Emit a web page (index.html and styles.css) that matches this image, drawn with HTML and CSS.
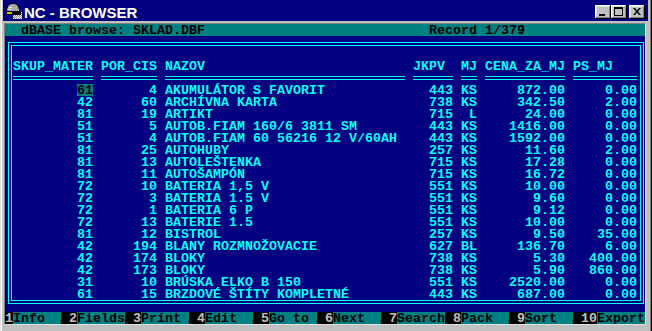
FILE: index.html
```html
<!DOCTYPE html>
<html>
<head>
<meta charset="utf-8">
<title>NC - BROWSER</title>
<link rel="stylesheet" href="styles.css">
</head>
<body>
<div class="window">
  <div class="titlebar">
    <svg class="app-icon" viewBox="0 0 18 16" width="18" height="16">
      <defs>
        <pattern id="dith" width="2" height="2" patternUnits="userSpaceOnUse">
          <rect width="2" height="2" fill="#808080"/>
          <rect width="1" height="1" fill="#ffffff"/>
          <rect x="1" y="1" width="1" height="1" fill="#ffffff"/>
        </pattern>
      </defs>
      <rect x="9" y="9" width="9" height="7" fill="url(#dith)"/>
      <path d="M2.5 8.5 C2.5 3.5 5 0.5 9 0.5 C13 0.5 15.5 3.5 15.5 8.5 Z" fill="#a8a8a8" stroke="#000"/>
      <path d="M5 4.5 h3 M4.5 6 h2" stroke="#e8e8e8"/>
      <rect x="1" y="8" width="16" height="4" fill="#000"/>
      <rect x="3" y="9" width="5" height="2" fill="#d8c400"/>
    </svg>
    <span class="title">NC - BROWSER</span>
    <div class="controls">
      <span class="btn btn-min"><i></i></span>
      <span class="btn btn-max"><i></i></span>
      <span class="btn btn-close"><svg viewBox="0 0 8 7" width="8" height="7"><path d="M0 0 L2 0 L4 2.5 L6 0 L8 0 L5 3.5 L8 7 L6 7 L4 4.5 L2 7 L0 7 L3 3.5 Z" fill="#000"/></svg></span>
    </div>
  </div>
  <div class="screen">
    <div class="status"><span>dBASE browse: SKLAD.DBF</span><span>Record 1/379</span></div>
    <div class="box">
      <div class="box-inner">
        <div class="grid">
          <div class="c">SKUP_MATER</div><div class="c">POR_CIS</div><div class="c">NAZOV</div><div class="c">JKPV</div><div class="c">MJ</div><div class="c">CENA_ZA_MJ</div><div class="c">PS_MJ</div>
          <div class="u"></div><div class="u"></div><div class="u"></div><div class="u"></div><div class="u"></div><div class="u"></div><div class="u"></div>

          <div class="c r"><span class="hl">61</span></div><div class="c r">4</div><div class="c">AKUMULÁTOR S FAVORIT</div><div class="c r">443</div><div class="c r">KS</div><div class="c r">872.00</div><div class="c r">0.00</div>
          <div class="c r">42</div><div class="c r">60</div><div class="c">ARCHÍVNA KARTA</div><div class="c r">738</div><div class="c r">KS</div><div class="c r">342.50</div><div class="c r">2.00</div>
          <div class="c r">81</div><div class="c r">19</div><div class="c">ARTIKT</div><div class="c r">715</div><div class="c r">L</div><div class="c r">24.00</div><div class="c r">0.00</div>
          <div class="c r">51</div><div class="c r">5</div><div class="c">AUTOB.FIAM 160/6 3811 SM</div><div class="c r">443</div><div class="c r">KS</div><div class="c r">1416.00</div><div class="c r">0.00</div>
          <div class="c r">51</div><div class="c r">4</div><div class="c">AUTOB.FIAM 60 56216 12 V/60AH</div><div class="c r">443</div><div class="c r">KS</div><div class="c r">1592.00</div><div class="c r">0.00</div>
          <div class="c r">81</div><div class="c r">25</div><div class="c">AUTOHUBY</div><div class="c r">257</div><div class="c r">KS</div><div class="c r">11.60</div><div class="c r">2.00</div>
          <div class="c r">81</div><div class="c r">13</div><div class="c">AUTOLEŠTENKA</div><div class="c r">715</div><div class="c r">KS</div><div class="c r">17.28</div><div class="c r">0.00</div>
          <div class="c r">81</div><div class="c r">11</div><div class="c">AUTOŠAMPÓN</div><div class="c r">715</div><div class="c r">KS</div><div class="c r">16.72</div><div class="c r">0.00</div>
          <div class="c r">72</div><div class="c r">10</div><div class="c">BATERIA 1,5 V</div><div class="c r">551</div><div class="c r">KS</div><div class="c r">10.00</div><div class="c r">0.00</div>
          <div class="c r">72</div><div class="c r">3</div><div class="c">BATERIA 1.5 V</div><div class="c r">551</div><div class="c r">KS</div><div class="c r">9.60</div><div class="c r">0.00</div>
          <div class="c r">72</div><div class="c r">1</div><div class="c">BATERIA 6 P</div><div class="c r">551</div><div class="c r">KS</div><div class="c r">9.12</div><div class="c r">0.00</div>
          <div class="c r">72</div><div class="c r">13</div><div class="c">BATERIE 1.5</div><div class="c r">551</div><div class="c r">KS</div><div class="c r">10.00</div><div class="c r">0.00</div>
          <div class="c r">81</div><div class="c r">12</div><div class="c">BISTROL</div><div class="c r">257</div><div class="c r">KS</div><div class="c r">9.50</div><div class="c r">35.00</div>
          <div class="c r">42</div><div class="c r">194</div><div class="c">BLANY ROZMNOŽOVACIE</div><div class="c r">627</div><div class="c r">BL</div><div class="c r">136.70</div><div class="c r">6.00</div>
          <div class="c r">42</div><div class="c r">174</div><div class="c">BLOKY</div><div class="c r">738</div><div class="c r">KS</div><div class="c r">5.30</div><div class="c r">400.00</div>
          <div class="c r">42</div><div class="c r">173</div><div class="c">BLOKY</div><div class="c r">738</div><div class="c r">KS</div><div class="c r">5.90</div><div class="c r">860.00</div>
          <div class="c r">31</div><div class="c r">10</div><div class="c">BRÚSKA ELKO B 150</div><div class="c r">551</div><div class="c r">KS</div><div class="c r">2520.00</div><div class="c r">0.00</div>
          <div class="c r">61</div><div class="c r">15</div><div class="c">BRZDOVÉ ŠTÍTY KOMPLETNÉ</div><div class="c r">443</div><div class="c r">KS</div><div class="c r">687.00</div><div class="c r">0.00</div>
        </div>
      </div>
    </div>
    <div class="keys">
      <span class="kn">1</span><span class="kl">Info</span>
      <span class="kn">2</span><span class="kl">Fields</span>
      <span class="kn">3</span><span class="kl">Print</span>
      <span class="kn">4</span><span class="kl">Edit</span>
      <span class="kn">5</span><span class="kl">Go to</span>
      <span class="kn">6</span><span class="kl">Next</span>
      <span class="kn">7</span><span class="kl">Search</span>
      <span class="kn">8</span><span class="kl">Pack</span>
      <span class="kn">9</span><span class="kl">Sort</span>
      <span class="kn">10</span><span class="kl">Export</span>
    </div>
  </div>
</div>
</body>
</html>
```

FILE: styles.css
```css
html, body {
  margin: 0;
  padding: 0;
  background: #c0c0c0;
  overflow: hidden;
}

.window {
  width: 652px;
  height: 331px;
  box-sizing: border-box;
  padding: 0 4px 0 3px;
  background: #c0c0c0;
  box-shadow: inset 1px 0 #dfdfdf, inset 2px 0 #ffffff, inset -1px 0 #000000, inset -2px 0 #808080;
}

/* ---------- title bar ---------- */
.titlebar {
  height: 21px;
  margin-bottom: 2px;
  background: #000080;
  display: flex;
  align-items: flex-start;
}

.app-icon {
  display: block;
  margin: 3px 0 0 1px;
  flex: none;
}

.title {
  margin: 4px 0 0 2px;
  font-family: "Liberation Sans", Arial, sans-serif;
  font-weight: bold;
  font-size: 15px;
  line-height: 17px;
  color: #ffffff;
  white-space: pre;
}

.controls {
  margin: 5px 3px 0 auto;
  display: flex;
}

.btn {
  width: 16px;
  height: 14px;
  box-sizing: border-box;
  background: #c0c0c0;
  box-shadow: inset -1px -1px #000000, inset 1px 1px #ffffff, inset -2px -2px #808080, inset 2px 2px #dfdfdf;
  display: flex;
}

.btn-close {
  margin-left: 2px;
}

.btn-min i {
  display: block;
  width: 6px;
  height: 2px;
  background: #000;
  margin: 9px 0 0 4px;
}

.btn-max i {
  display: block;
  width: 9px;
  height: 9px;
  box-sizing: border-box;
  border: 1px solid #000;
  border-top-width: 2px;
  margin: 2px 0 0 3px;
}

.btn-close svg {
  display: block;
  margin: 3px 0 0 4px;
}

/* ---------- text-mode screen ---------- */
.screen {
  width: 640px;
  height: 300px;
  margin-left: 1px;
  border-top: 1px solid #808080;
  border-left: 1px solid #808080;
  border-right: 1px solid #dfdfdf;
  border-bottom: 1px solid #dfdfdf;
  background: #000080;
  color: #00ffff;
  font-family: "Liberation Mono", "Courier New", monospace;
  font-weight: bold;
  font-size: 13.333px;
  overflow: hidden;
}

.status {
  height: 12px;
  box-sizing: border-box;
  padding: 2px 0 0 16px;
  line-height: 10px;
  background: #008080;
  color: #000000;
  display: grid;
  grid-template-columns: 408px auto;
  white-space: pre;
}

.box {
  margin: 6px 1px 0 3px;
  border: 1px solid #00ffff;
  padding: 2px;
}

.box-inner {
  border: 1px solid #00ffff;
  height: 254px;
}

.grid {
  display: grid;
  grid-template-columns: 80px 56px 240px 40px 16px 80px 64px;
  grid-auto-rows: 12px;
  column-gap: 8px;
  padding: 14px 0 0 1px;
}

.c {
  height: 12px;
  box-sizing: border-box;
  padding-top: 2px;
  line-height: 10px;
  white-space: pre;
}

.r {
  text-align: right;
}

.u {
  height: 4px;
  margin-top: 4px;
  border-top: 1px solid #00ffff;
  border-bottom: 1px solid #00ffff;
  box-sizing: border-box;
}

.hl {
  display: inline-block;
  height: 12px;
  box-sizing: border-box;
  margin-top: -2px;
  padding-top: 2px;
  vertical-align: top;
  background: #008080;
  color: #000000;
}

/* ---------- function key bar ---------- */
.keys {
  margin-top: 8px;
  height: 12px;
  display: grid;
  grid-template-columns: 8px 48px repeat(8, 16px 48px) 24px 48px;
  white-space: pre;
}

.kn, .kl {
  height: 12px;
  box-sizing: border-box;
  padding-top: 2px;
  line-height: 10px;
}

.kn {
  background: #000000;
  color: #c0c0c0;
  text-align: right;
}

.kl {
  background: #008080;
  color: #000000;
}
```
